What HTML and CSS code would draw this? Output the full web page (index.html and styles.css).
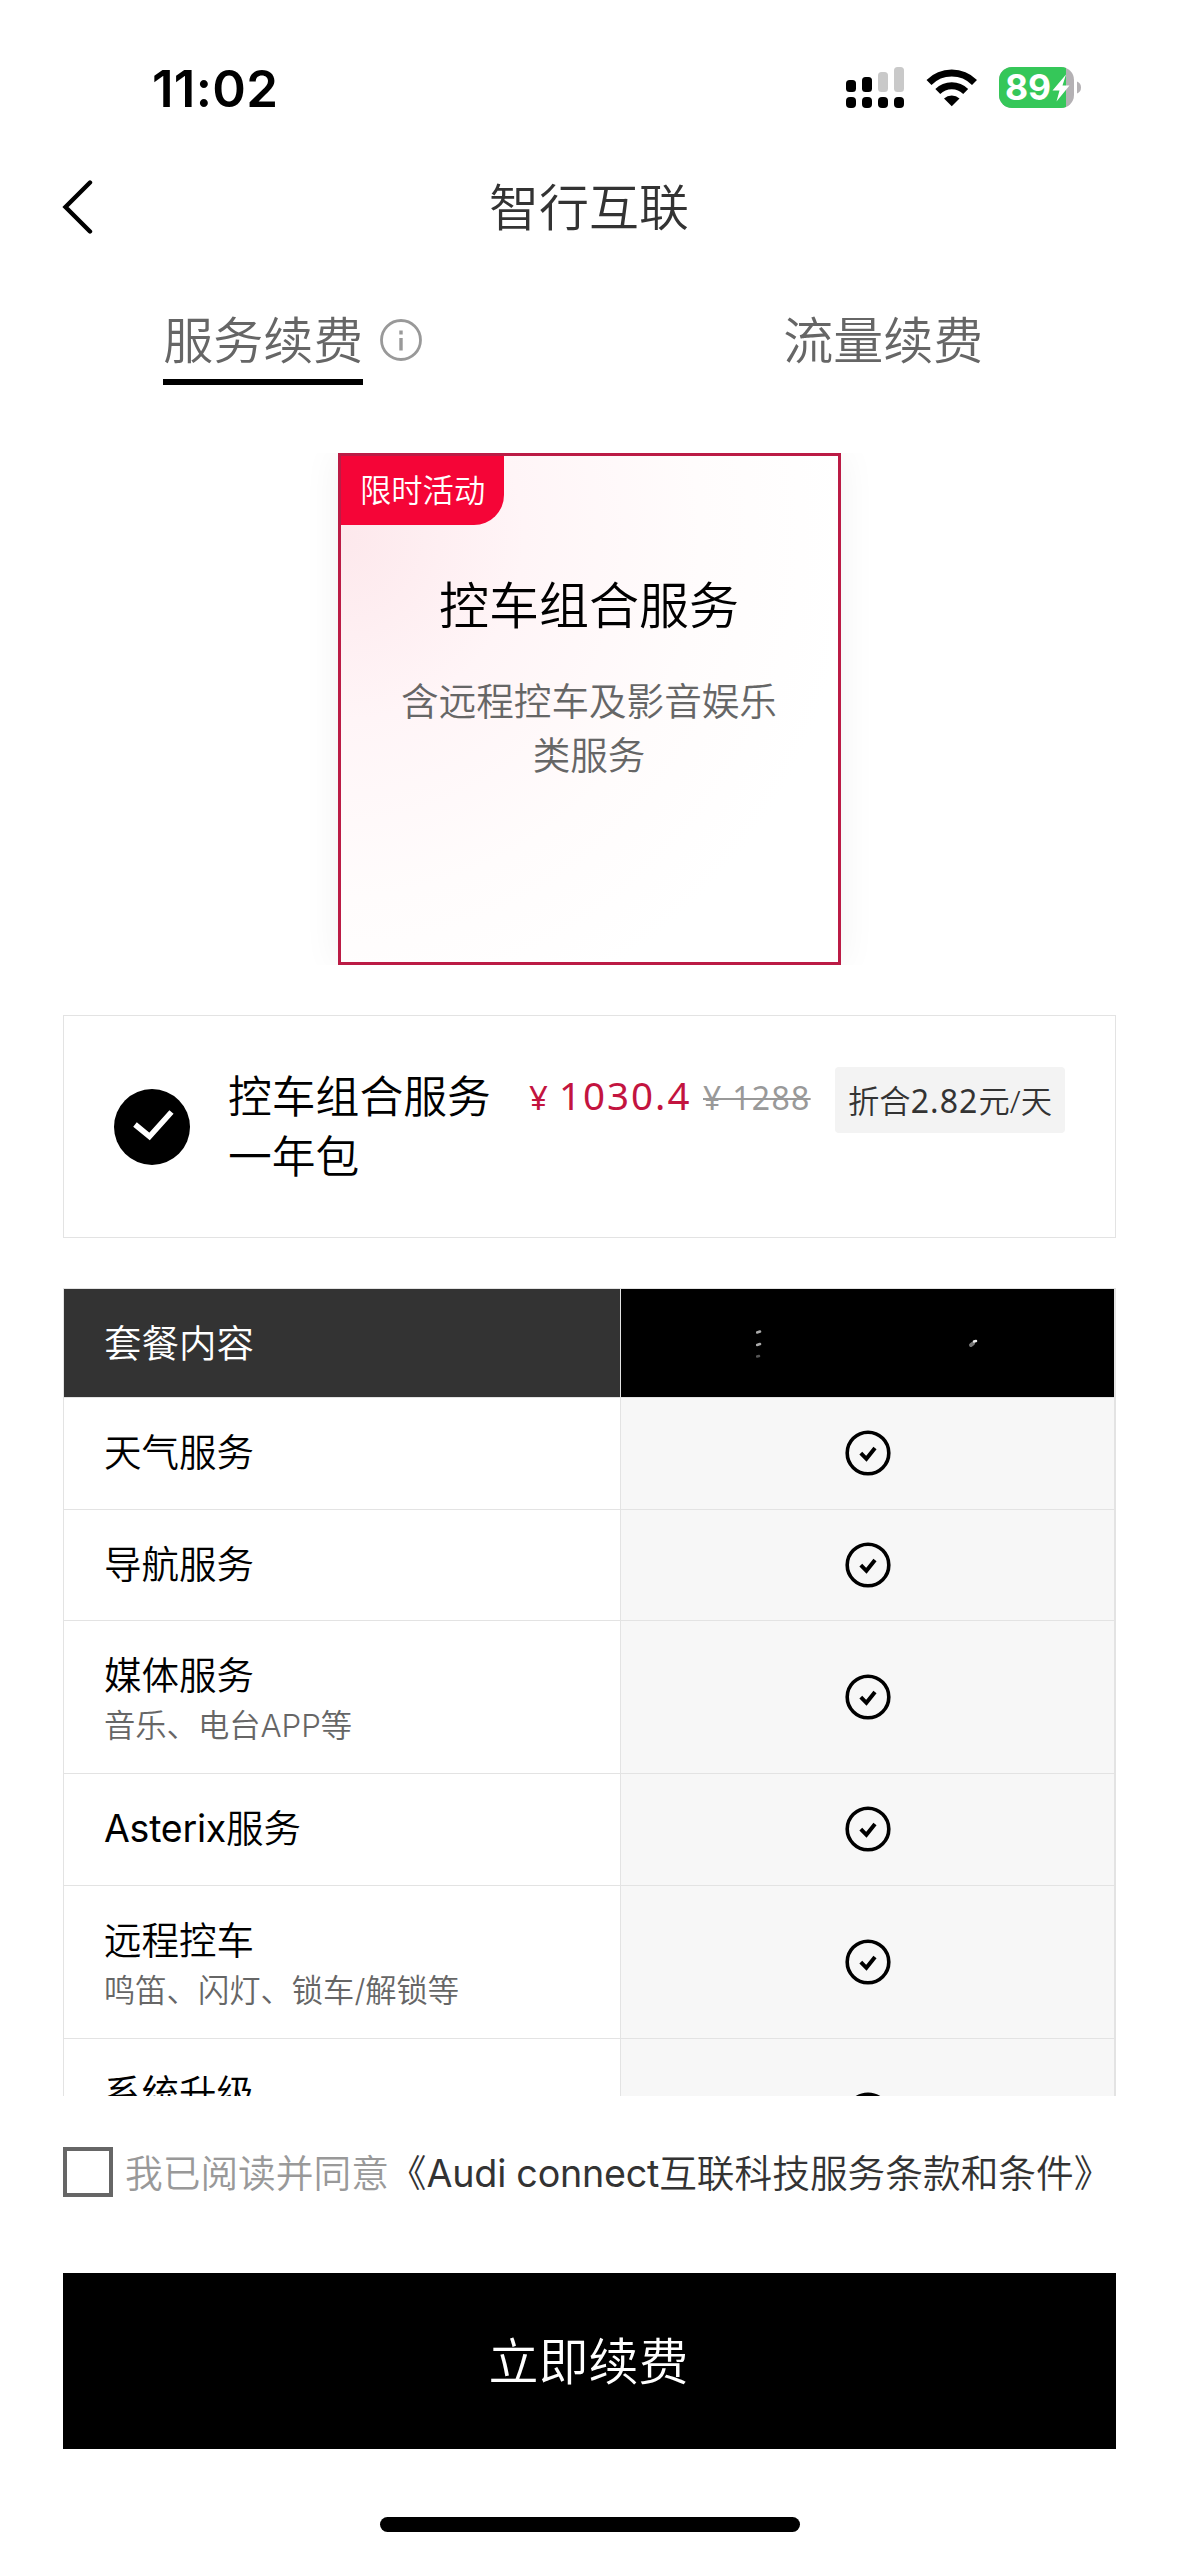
FILE: index.html
```html
<!DOCTYPE html>
<html lang="zh-CN">
<head>
<meta charset="utf-8">
<title>智行互联</title>
<link rel="stylesheet" href="styles.css">
</head>
<body>
<svg class="defs" aria-hidden="true">
  <symbol id="ok" viewBox="0 0 46 46">
    <circle cx="23" cy="23" r="20.8" fill="none" stroke="#000" stroke-width="3.6"/>
    <path d="M15.8 23.2 L21.4 28.8 L30 18" fill="none" stroke="#000" stroke-width="4"/>
  </symbol>
</svg>
<div class="page">
  <header class="status">
    <span class="time">11:02</span>
    <svg class="status-icons" width="240" height="50" viewBox="0 0 240 50">
      <g fill="#000">
        <rect x="6" y="18" width="10" height="12" rx="3.5"/>
        <rect x="22" y="15" width="10" height="15" rx="3.5"/>
        <rect x="6" y="35" width="10" height="11" rx="4"/>
        <rect x="22" y="35" width="10" height="11" rx="4"/>
        <rect x="38" y="35" width="10" height="11" rx="4"/>
        <rect x="54" y="35" width="10" height="11" rx="4"/>
      </g>
      <g fill="#c9c9c9">
        <rect x="38" y="10" width="10" height="20" rx="3.5"/>
        <rect x="54" y="5" width="10" height="25" rx="3.5"/>
      </g>
      <g fill="none" stroke="#000" stroke-width="7">
        <path d="M89 20.5 A32 32 0 0 1 134.500 20.500"/>
        <path d="M97.800 29.500 A19.800 19.800 0 0 1 125.700 29.500"/>
      </g>
      <path d="M104 36.500 A11.500 11.500 0 0 1 119.500 36.500 L111.750 44.200 Z" fill="#000"/>
      <clipPath id="cell"><rect x="159" y="5" width="75" height="41" rx="13"/></clipPath>
      <g clip-path="url(#cell)">
        <rect x="159" y="5" width="75" height="41" fill="#b4b1b4"/>
        <rect x="159" y="5" width="67" height="41" fill="#35c759"/>
      </g>
      <path d="M237 19.500 Q241 21 241 25.500 Q241 30 237 31.500 Z" fill="#b4b1b4"/>
      <text class="charge" x="165" y="38">89</text>
      <path d="M226 12.500 L212.500 28.500 H219.500 L216.500 39.500 L229.500 23.500 H222.500 Z" fill="#fff"/>
    </svg>
  </header>

  <nav class="navbar">
    <svg class="back" width="32" height="56" viewBox="0 0 32 56"><path d="M29 3.500 L4.500 28 L29 52.500" fill="none" stroke="#000" stroke-width="4.400" stroke-linecap="round"/></svg>
    <h1 class="title">智行互联</h1>
  </nav>

  <div class="tabs">
    <div class="tab">
      <span class="tab-label active">服务续费</span>
      <svg class="info" width="42" height="44" viewBox="0 0 42 44"><circle cx="21" cy="22" r="19.500" fill="none" stroke="#999" stroke-width="2.800"/><path d="M21 12.500 V16.500 M21 20 V32.500" stroke="#999" stroke-width="3.400"/></svg>
    </div>
    <div class="tab"><span class="tab-label">流量续费</span></div>
  </div>

  <div class="products">
    <section class="product">
      <span class="badge">限时活动</span>
      <h2 class="product-name">控车组合服务</h2>
      <p class="product-desc">含远程控车及影音娱乐类服务</p>
    </section>
  </div>

  <section class="plan">
    <svg class="radio" width="76" height="76" viewBox="0 0 76 76"><circle cx="38" cy="38" r="38" fill="#000"/><path d="M21 35.500 L35.500 47.500 L57.500 23" fill="none" stroke="#fff" stroke-width="5.600"/></svg>
    <div class="plan-name">控车组合服务一年包</div>
    <div class="price"><span class="yen">¥</span><span class="amount">1030.4</span></div>
    <div class="was">¥ 1288</div>
    <div class="daily">折合<span class="num">2.82</span>元/天</div>
  </section>

  <div class="table">
    <div class="row head">
      <div class="cell">套餐内容</div>
      <div class="mark">
        <svg width="224" height="32" viewBox="0 0 224 32"><g fill="none" stroke-linecap="round" stroke-width="2.500"><path d="M1 5.500 L4 4.500" stroke="#aaa"/><path d="M1 18 L4 17" stroke="#aaa"/><path d="M1 29.500 L3 29" stroke="#555"/><path d="M215 18 L217 16.500" stroke="#777" stroke-width="4"/><path d="M218 14.500 L220 14" stroke="#eee"/></g></svg>
      </div>
    </div>
    <div class="row"><div class="cell">天气服务</div><div class="mark"><svg class="ok"><use href="#ok"/></svg></div></div>
    <div class="row"><div class="cell">导航服务</div><div class="mark"><svg class="ok"><use href="#ok"/></svg></div></div>
    <div class="row double"><div class="cell">媒体服务<small class="note">音乐、电台APP等</small></div><div class="mark"><svg class="ok"><use href="#ok"/></svg></div></div>
    <div class="row"><div class="cell"><span class="latin">Asterix</span>服务</div><div class="mark"><svg class="ok"><use href="#ok"/></svg></div></div>
    <div class="row double"><div class="cell">远程控车<small class="note">鸣笛、闪灯、锁车/解锁等</small></div><div class="mark"><svg class="ok"><use href="#ok"/></svg></div></div>
    <div class="row double last"><div class="cell">系统升级</div><div class="mark"><svg class="ok"><use href="#ok"/></svg></div></div>
  </div>

  <label class="agree"><span class="box"></span><span class="agree-text">我已阅读并同意<span class="terms">《<span class="latin">Audi connect</span>互联科技服务条款和条件》</span></span></label>
  <button class="pay">立即续费</button>
  <div class="home"></div>
</div>
</body>
</html>
```
FILE: styles.css
```css
* { box-sizing: border-box; }
body {
  margin: 0;
  background: #fff;
  color: #000;
  font-family: Inter, "Noto Sans CJK SC", sans-serif;
  font-weight: 350;
}
.defs { position: absolute; width: 0; height: 0; }
.latin { font-weight: 380; letter-spacing: -.25px; }
.page {
  display: flex;
  flex-direction: column;
  width: 1179px;
  height: 2556px;
  overflow: hidden;
}
.status {
  display: flex;
  justify-content: space-between;
  height: 152px;
  padding: 62px 99px 0 152px;
}
.time { font-size: 51px; line-height: 53px; font-weight: 600; letter-spacing: .3px; }
.status-icons { display: block; overflow: visible; }
.charge { font: 700 35.500px Inter, sans-serif; fill: #fff; }

.navbar {
  display: grid;
  grid-template-columns: 32px 1fr 32px;
  align-items: center;
  height: 110px;
  padding: 0 61px;
}
.back { display: block; }
.title {
  margin: 0;
  padding: 2px 1px 0 0;
  text-align: center;
  font-size: 50px;
  line-height: 60px;
  font-weight: inherit;
  color: #333;
}

.tabs { display: flex; height: 191px; padding: 46px 0 0; }
.tab { display: flex; flex: 1; justify-content: center; align-items: flex-start; gap: 17px; padding-right: 5px; }
.tab:last-child { padding-right: 3px; }
.tab-label { height: 77px; font-size: 50px; line-height: 66px; color: #666; }
.tab-label.active { border-bottom: 6px solid #000; }
.info { margin-top: 10px; }

.products {
  display: flex;
  justify-content: center;
  height: 512px;
  clip-path: inset(0);
}
.product {
  display: flex;
  flex-direction: column;
  align-items: center;
  width: 503px;
  height: 512px;
  border: 3px solid #bb1b45;
  background: radial-gradient(circle at 0 16%, #fde8ec 0%, #fff5f7 28%, #fffcfc 55%, #fff 78%);
  box-shadow: 0 0 36px rgba(0, 0, 0, .06);
}
.badge {
  align-self: flex-start;
  width: 163px;
  height: 69px;
  padding-left: 19px;
  border-radius: 0 0 30px 0;
  background: #f50537;
  color: #fff;
  font-size: 31.300px;
  line-height: 70px;
}
.product-name { margin: 51px 1px 0 0; font-size: 50px; line-height: 60px; font-weight: inherit; }
.product-desc { width: 380px; margin: 39px 1px 0 0; color: #666; font-size: 37.600px; line-height: 54px; text-align: center; }

.plan {
  display: flex;
  align-items: flex-start;
  width: 1053px;
  height: 223px;
  margin: 50px 0 0 63px;
  padding: 52px 50px 0;
  border: 1px solid #e3e3e3;
}
.radio { margin-top: 21px; }
.plan-name { width: 264px; margin-left: 38px; font-size: 43.800px; line-height: 60px; }
.price { display: flex; align-items: baseline; width: 174px; margin-left: 37px; color: #c3143f; font-family: "Noto Sans", sans-serif; font-weight: 400; line-height: 55px; }
.yen { width: 30px; font-size: 33px; }
.amount { font-size: 38.500px; letter-spacing: 2px; }
.was {
  width: 107px;
  color: #999;
  font: 400 32px/60px "Noto Sans", sans-serif;
  letter-spacing: 1.300px;
  white-space: nowrap;
  text-decoration: line-through;
  text-decoration-thickness: 2px;
}
.daily {
  width: 230px;
  height: 66px;
  margin: -1px 0 0 25px;
  border-radius: 4px;
  background: #f3f3f3;
  color: #333;
  font-family: "Noto Sans", "Noto Sans CJK SC", sans-serif;
  font-size: 31.300px;
  line-height: 67px;
  text-align: center;
  white-space: nowrap;
}
.num { font-weight: 400; font-size: 32px; letter-spacing: 1.100px; }

.table {
  width: 1053px;
  height: 808px;
  margin: 50px 0 0 63px;
  overflow: hidden;
  border-top: 1px solid #e3e3e3;
  border-left: 1px solid #e3e3e3;
  border-right: 2px solid #e3e3e3;
}
.row { display: grid; grid-template-columns: 557px 1fr; height: 111.500px; border-bottom: 1px solid #e3e3e3; }
.row.double { height: 153px; }
.cell {
  padding: 32px 0 0 40px;
  border-right: 1px solid #e3e3e3;
  font-size: 37.500px;
  line-height: 46px;
}
.note { display: block; margin-top: 4px; color: #666; font-size: 31.300px; line-height: 46px; }
.mark { display: flex; align-items: center; justify-content: center; background: #f7f7f7; }
.ok { width: 46px; height: 46px; }
.head { height: 109px; }
.head .cell { background: #333; color: #fff; }
.head .mark { background: #000; }

.agree { display: flex; align-items: center; gap: 12px; height: 152px; padding-left: 63px; font-size: 37.700px; }
.box { width: 50px; height: 50px; border: 4px solid #666; }
.agree-text { padding-bottom: 4px; color: #999; white-space: nowrap; }
.terms { color: #333; }
.pay {
  width: 1053px;
  height: 176px;
  margin: 25px 0 0 63px;
  padding: 0 2px 7px 0;
  border: 0;
  background: #000;
  color: #fff;
  font: inherit;
  font-size: 50px;
}
.home { width: 420px; height: 15px; margin: 68px 0 0 380px; border-radius: 8px; background: #000; }
```
